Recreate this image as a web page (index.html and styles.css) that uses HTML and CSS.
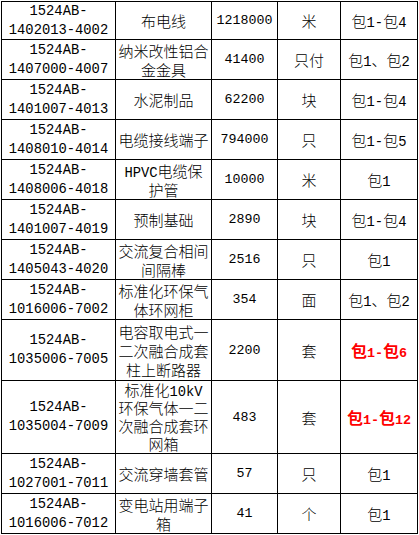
FILE: index.html
```html
<!DOCTYPE html>
<html lang="zh">
<head>
<meta charset="utf-8">
<title>清单</title>
<link rel="stylesheet" href="styles.css">
</head>
<body>
<div class="sheet">
  <div class="cell mono"><p>1524AB-</p><p>1402013-4002</p></div>
  <div class="cell"><p>布电线</p></div>
  <div class="cell mono num"><p>1218000</p></div>
  <div class="cell"><p>米</p></div>
  <div class="cell"><p>包<span class="a">1-</span>包<span class="a">4</span></p></div>

  <div class="cell mono"><p>1524AB-</p><p>1407000-4007</p></div>
  <div class="cell"><p>纳米改性铝合</p><p>金金具</p></div>
  <div class="cell mono num"><p>41400</p></div>
  <div class="cell"><p>只付</p></div>
  <div class="cell"><p>包<span class="a">1</span>、包<span class="a">2</span></p></div>

  <div class="cell mono"><p>1524AB-</p><p>1401007-4013</p></div>
  <div class="cell"><p>水泥制品</p></div>
  <div class="cell mono num"><p>62200</p></div>
  <div class="cell"><p>块</p></div>
  <div class="cell"><p>包<span class="a">1-</span>包<span class="a">4</span></p></div>

  <div class="cell mono"><p>1524AB-</p><p>1408010-4014</p></div>
  <div class="cell"><p>电缆接线端子</p></div>
  <div class="cell mono num"><p>794000</p></div>
  <div class="cell"><p>只</p></div>
  <div class="cell"><p>包<span class="a">1-</span>包<span class="a">5</span></p></div>

  <div class="cell mono"><p>1524AB-</p><p>1408006-4018</p></div>
  <div class="cell"><p><span class="a">HPVC</span>电缆保</p><p>护管</p></div>
  <div class="cell mono num"><p>10000</p></div>
  <div class="cell"><p>米</p></div>
  <div class="cell"><p>包<span class="a">1</span></p></div>

  <div class="cell mono"><p>1524AB-</p><p>1401007-4019</p></div>
  <div class="cell"><p>预制基础</p></div>
  <div class="cell mono num"><p>2890</p></div>
  <div class="cell"><p>块</p></div>
  <div class="cell"><p>包<span class="a">1-</span>包<span class="a">4</span></p></div>

  <div class="cell mono"><p>1524AB-</p><p>1405043-4020</p></div>
  <div class="cell"><p>交流复合相间</p><p>间隔棒</p></div>
  <div class="cell mono num"><p>2516</p></div>
  <div class="cell"><p>只</p></div>
  <div class="cell"><p>包<span class="a">1</span></p></div>

  <div class="cell mono"><p>1524AB-</p><p>1016006-7002</p></div>
  <div class="cell"><p>标准化环保气</p><p>体环网柜</p></div>
  <div class="cell mono num"><p>354</p></div>
  <div class="cell"><p>面</p></div>
  <div class="cell"><p>包<span class="a">1</span>、包<span class="a">2</span></p></div>

  <div class="cell mono"><p>1524AB-</p><p>1035006-7005</p></div>
  <div class="cell"><p>电容取电式一</p><p>二次融合成套</p><p>柱上断路器</p></div>
  <div class="cell mono num"><p>2200</p></div>
  <div class="cell"><p>套</p></div>
  <div class="cell hl"><p>包<span class="a">1-</span>包<span class="a">6</span></p></div>

  <div class="cell mono"><p>1524AB-</p><p>1035004-7009</p></div>
  <div class="cell tight"><p>标准化<span class="a">10kV</span></p><p>环保气体一二</p><p>次融合成套环</p><p>网箱</p></div>
  <div class="cell mono num"><p>483</p></div>
  <div class="cell"><p>套</p></div>
  <div class="cell hl"><p>包<span class="a">1-</span>包<span class="a">12</span></p></div>

  <div class="cell mono"><p>1524AB-</p><p>1027001-7011</p></div>
  <div class="cell"><p>交流穿墙套管</p></div>
  <div class="cell mono num"><p>57</p></div>
  <div class="cell"><p>只</p></div>
  <div class="cell"><p>包<span class="a">1</span></p></div>

  <div class="cell mono"><p>1524AB-</p><p>1016006-7012</p></div>
  <div class="cell"><p>变电站用端子</p><p>箱</p></div>
  <div class="cell mono num"><p>41</p></div>
  <div class="cell"><p>个</p></div>
  <div class="cell"><p>包<span class="a">1</span></p></div>
</div>
</body>
</html>
```

FILE: styles.css
```css
html, body {
  margin: 0;
  padding: 0;
  background: #fff;
}

body {
  padding: 1px 0 0 1px;
}

.sheet {
  display: grid;
  grid-template-columns: 113px 95px 65px 62px 76px;
  grid-template-rows: 37px 39px 39px 39px 39px 39px 39px 39px 60px 72px 39px 39px;
  gap: 1px;
  padding: 1px;
  background: #000;
  width: max-content;
  font-family: "Noto Sans CJK SC", "Noto Sans", sans-serif;
  font-weight: 300;
  font-size: 15px;
  line-height: 19px;
  color: #000;
}

.cell {
  background: #fff;
  display: flex;
  flex-direction: column;
  align-items: center;
  justify-content: center;
  text-align: center;
  white-space: nowrap;
  overflow: hidden;
}

.cell p {
  margin: 0;
}

.tight {
  line-height: 18px;
}

.mono,
.a {
  font-family: "Liberation Mono", monospace;
  font-weight: 400;
  font-size: 13.8px;
}

.num {
  font-size: 13.3px;
}

.cell p .a {
  line-height: 0;
}

.hl {
  color: #ff0000;
  font-weight: bold;
  font-size: 16px;
}

.hl .a {
  font-size: 13.4px;
  font-weight: bold;
}
```
